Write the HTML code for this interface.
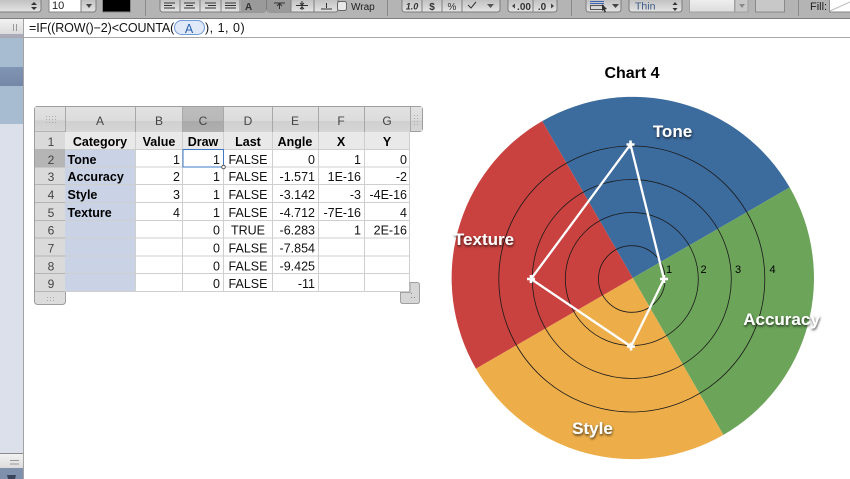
<!DOCTYPE html>
<html><head><meta charset="utf-8"><style>
html,body{margin:0;padding:0;background:#fff;width:850px;height:479px;overflow:hidden}
svg{display:block;font-family:"Liberation Sans",sans-serif}
.h{font-size:12.5px;font-weight:bold;text-anchor:middle;fill:#000}
.b{font-size:12.5px;font-weight:bold;fill:#000}
.r{font-size:12.5px;text-anchor:end;fill:#111}
.c{font-size:12.5px;text-anchor:middle;fill:#111}
.hd{font-size:12px;text-anchor:middle;fill:#444}
.lab{font-size:17px;font-weight:bold;fill:#fff;text-anchor:middle;filter:url(#sh)}
.t{font-size:11px;fill:#222}
.n{font-size:11px;fill:#000}
.gl{stroke:#cfcfcf;stroke-width:1;fill:none}
.bt{fill:url(#btn);stroke:#7d7d7d;stroke-width:1}
</style></head><body>
<svg width="850" height="479" viewBox="0 0 850 479" xmlns="http://www.w3.org/2000/svg">
<defs>
<linearGradient id="btn" x1="0" y1="0" x2="0" y2="1"><stop offset="0" stop-color="#bcbcbc"/><stop offset="1" stop-color="#e4e4e4"/></linearGradient>
<linearGradient id="hdg" x1="0" y1="0" x2="0" y2="1"><stop offset="0" stop-color="#e2e2e2"/><stop offset="0.55" stop-color="#dcdcdc"/><stop offset="0.56" stop-color="#cfcfcf"/><stop offset="1" stop-color="#d6d6d6"/></linearGradient>
<linearGradient id="hdd" x1="0" y1="0" x2="0" y2="1"><stop offset="0" stop-color="#bdbdbd"/><stop offset="0.55" stop-color="#b8b8b8"/><stop offset="0.56" stop-color="#a9a9a9"/><stop offset="1" stop-color="#b0b0b0"/></linearGradient>
<linearGradient id="sel" x1="0" y1="0" x2="0" y2="1"><stop offset="0" stop-color="#8094b4"/><stop offset="1" stop-color="#7587a6"/></linearGradient>
<linearGradient id="fb" x1="0" y1="0" x2="0" y2="1"><stop offset="0" stop-color="#f2f2f2"/><stop offset="1" stop-color="#dcdcdc"/></linearGradient>
<filter id="sh" x="-20%" y="-30%" width="140%" height="170%"><feDropShadow dx="0.5" dy="1.5" stdDeviation="1.4" flood-color="#000" flood-opacity="0.75"/></filter>
</defs>

<!-- toolbar -->
<rect x="0" y="0" width="850" height="18" fill="#b4b4b4"/>
<rect x="0" y="18" width="850" height="1" fill="#7e7e7e"/>
<path class="bt" d="M-5 -2H41V9Q41 12 38 12H-5Z"/>
<path d="M34 2l-3 3h6zM34 10l-3-3h6z" fill="#333"/>
<path d="M49 -2H81V12H49Z" fill="#fff" stroke="#888"/>
<text x="52" y="9" class="t">10</text>
<path class="bt" d="M81 -2H96V9Q96 12 93 12H81Z"/>
<path d="M86 4h6l-3 4z" fill="#444"/>
<rect x="102.500" y="-2" width="28" height="14" fill="#000" stroke="#888"/>
<rect x="145" y="0" width="1" height="16" fill="#8a8a8a"/>
<path class="bt" d="M160 -2H266V9Q266 12 263 12H163Q160 12 160 9Z"/>
<path d="M180 -2V12M200 -2V12M221 -2V12M240 -2V12" stroke="#808080"/>
<rect x="241" y="-1" width="25" height="13" fill="#9a9a9a"/>
<path d="M164 3h11M164 5.500h8M164 8h11M184 3h11M186 5.500h7M184 8h11M205 3h11M208 5.500h8M205 8h11M225 3h11M225 5.500h11M225 8h11" stroke="#333" stroke-width="1"/>
<text x="245" y="10" style="font-size:10px;font-weight:bold;fill:#333">A</text>
<path class="bt" d="M267 -2H338V9Q338 12 335 12H270Q267 12 267 9Z"/>
<rect x="267" y="-1" width="24" height="13" fill="#9a9a9a"/>
<path d="M291 -2V12M314 -2V12" stroke="#808080"/>
<path d="M274 3h11M279.500 4v5M277 6l2.500-2.500 2.500 2.500M296 5.500h12M302 1v9M300 3l2 2 2-2M300 9l2-2 2 2M321 9h11M326.500 3v5" stroke="#333" fill="none"/>
<rect x="337.500" y="1.500" width="9" height="9" rx="2" fill="#e8e8e8" stroke="#666"/>
<text x="351" y="10" style="font-size:10px;fill:#222">Wrap</text>
<rect x="387" y="0" width="1" height="16" fill="#8a8a8a"/>
<path class="bt" d="M402 -2H500V9Q500 12 497 12H405Q402 12 402 9Z"/>
<path d="M422 -2V12M442 -2V12M462 -2V12" stroke="#808080"/>
<text x="412" y="9.500" style="font-size:9px;font-weight:bold;font-style:italic;text-anchor:middle;fill:#333">1.0</text>
<text x="432" y="10" style="font-size:10px;font-weight:bold;text-anchor:middle;fill:#333">$</text>
<text x="452" y="10" style="font-size:10px;text-anchor:middle;fill:#333">%</text>
<path d="M468 5l3 3 5-6" stroke="#333" fill="none"/>
<path d="M487 4h7l-3.500 4z" fill="#555"/>
<path class="bt" d="M508 -2H557V9Q557 12 554 12H511Q508 12 508 9Z"/>
<path d="M533 -2V12" stroke="#808080"/>
<path d="M515 3.500l-3 2.500 3 2.500z" fill="#444"/>
<text x="524" y="10" style="font-size:10px;font-weight:bold;text-anchor:middle;fill:#333">.00</text>
<text x="542" y="10" style="font-size:10px;font-weight:bold;text-anchor:middle;fill:#333">.0</text>
<path d="M551 3.500l3 2.500-3 2.500z" fill="#444"/>
<rect x="571" y="0" width="1" height="16" fill="#8a8a8a"/>
<path class="bt" d="M586 -2H621V9Q621 12 618 12H589Q586 12 586 9Z"/>
<path d="M590 1.500h14" stroke="#3d63b5"/><path d="M590 3.500h14" stroke="#3d63b5"/>
<rect x="590.500" y="5.500" width="13" height="4" fill="none" stroke="#555"/>
<path d="M602 4l5 5-2 .5 1 2.500-1.500 .5-1-2.500-1.500 1z" fill="#333"/>
<path d="M612 4h7l-3.500 4z" fill="#444"/>
<path class="bt" d="M629 -2H682V9Q682 12 679 12H632Q629 12 629 9Z"/>
<text x="635" y="9.500" style="font-size:10.500px;fill:#3b5a86">Thin</text>
<path d="M675 2l-2.500 3h5zM675 11l-2.500-3h5z" fill="#333"/>
<rect x="689.500" y="-2" width="45" height="14" fill="url(#fb)" stroke="#a0a0a0"/>
<rect x="735" y="-2" width="13" height="14" fill="#c8c8c8" stroke="#a0a0a0"/>
<path d="M739 4h6l-3 4z" fill="#8a8a8a"/>
<rect x="755.500" y="-2" width="29" height="14" fill="#c8c8c8" stroke="#8a8a8a"/>
<rect x="798" y="0" width="1" height="16" fill="#8a8a8a"/>
<text x="810" y="10" class="t">Fill:</text>
<rect x="829.500" y="-2" width="30" height="14" fill="#fff" stroke="#888"/>
<path d="M830 11L850 2" stroke="#bbb"/>

<!-- formula bar -->
<rect x="0" y="19" width="850" height="18" fill="#fff"/>
<rect x="0" y="19" width="24" height="15" fill="url(#fb)"/>
<path d="M13.500 24v7M16.500 24v7" stroke="#999"/>
<rect x="0" y="34" width="24" height="3" fill="#aab"/>
<rect x="0" y="37" width="850" height="1" fill="#a8a8a8"/>
<text x="29" y="32" style="font-size:12.500px;fill:#111;letter-spacing:-0.1px">=IF((ROW()−2)&lt;COUNTA(</text>
<rect x="174.500" y="20.500" width="30" height="14" rx="7" fill="#dfe9f8" stroke="#6f9bd8"/>
<text x="189" y="33" style="font-size:12.500px;text-anchor:middle;fill:#2e62b0">A</text>
<text x="205" y="32" style="font-size:12.500px;fill:#111;letter-spacing:0.5px">), 1, 0)</text>

<!-- left sidebar -->
<rect x="0" y="38" width="24" height="441" fill="#dfe3ec"/>
<rect x="0" y="38" width="24" height="29" fill="#a8bcd1"/>
<rect x="0" y="67" width="24" height="19" fill="url(#sel)"/>
<rect x="0" y="86" width="24" height="38" fill="#a8bcd1"/>
<rect x="0" y="124" width="24" height="329" fill="#dce0ea"/>
<rect x="0" y="453" width="24" height="1" fill="#8a8a8a"/>
<rect x="0" y="454" width="24" height="14" fill="url(#fb)"/>
<path d="M10 460.500h9M10 464h9" stroke="#999"/>
<rect x="0" y="468" width="24" height="11" fill="#7f90ad"/>
<path d="M7 475h9l-1 4h-7z" fill="#39445a"/>
<rect x="23" y="19" width="1" height="460" fill="#a4a4a4"/>

<!-- table frame -->
<rect x="34.500" y="106.500" width="388" height="25" rx="3" fill="#d9d9d9" stroke="#9e9e9e"/>
<rect x="34.500" y="106.500" width="31" height="198" rx="3" fill="#dcdcdc" stroke="#9e9e9e"/>
<rect x="35" y="107" width="30" height="24" fill="url(#hdg)"/>
<rect x="65" y="107" width="70" height="25" fill="url(#hdg)"/>
<rect x="135" y="107" width="47" height="25" fill="url(#hdg)"/>
<rect x="182" y="107" width="41" height="25" fill="url(#hdd)"/>
<rect x="223" y="107" width="49" height="25" fill="url(#hdg)"/>
<rect x="272" y="107" width="46" height="25" fill="url(#hdg)"/>
<rect x="318" y="107" width="46" height="25" fill="url(#hdg)"/>
<rect x="364" y="107" width="46" height="25" fill="url(#hdg)"/>
<rect x="410" y="107" width="12" height="24" fill="url(#hdg)"/>
<path d="M65.500 107V132M135.500 107V132M182.500 107V132M223.500 107V132M272.500 107V132M318.500 107V132M364.500 107V132M410.500 107V132" stroke="#a8a8a8"/>
<g fill="#aaa"><rect x="46" y="116" width="1" height="1"/><rect x="49" y="116" width="1" height="1"/><rect x="52" y="116" width="1" height="1"/><rect x="55" y="116" width="1" height="1"/><rect x="46" y="119" width="1" height="1"/><rect x="49" y="119" width="1" height="1"/><rect x="52" y="119" width="1" height="1"/><rect x="55" y="119" width="1" height="1"/><rect x="46" y="122" width="1" height="1"/><rect x="49" y="122" width="1" height="1"/><rect x="52" y="122" width="1" height="1"/><rect x="55" y="122" width="1" height="1"/>
<rect x="414" y="115" width="1" height="1"/><rect x="417" y="115" width="1" height="1"/><rect x="414" y="118" width="1" height="1"/><rect x="417" y="118" width="1" height="1"/><rect x="414" y="121" width="1" height="1"/><rect x="417" y="121" width="1" height="1"/><rect x="414" y="124" width="1" height="1"/><rect x="417" y="124" width="1" height="1"/>
<rect x="47" y="297" width="1" height="1"/><rect x="50" y="297" width="1" height="1"/><rect x="53" y="297" width="1" height="1"/><rect x="47" y="300" width="1" height="1"/><rect x="50" y="300" width="1" height="1"/><rect x="53" y="300" width="1" height="1"/></g>
<text class="hd" x="100" y="125">A</text><text class="hd" x="159" y="125">B</text><text class="hd" x="203" y="125">C</text><text class="hd" x="248" y="125">D</text><text class="hd" x="295" y="125">E</text><text class="hd" x="341" y="125">F</text><text class="hd" x="387" y="125">G</text>

<!-- row headers -->
<rect x="35" y="132" width="30" height="17.500" fill="#dadada"/>
<rect x="35" y="149.500" width="30" height="17.500" fill="#b5b5b5"/>
<rect x="35" y="167" width="30" height="124" fill="#dadada"/>
<path d="M35 131.500H65M35 149.500H65M35 167H65M35 184.500H65M35 202.500H65M35 220.500H65M35 238H65M35 256H65M35 273.500H65M35 291.500H65" stroke="#b4b4b4"/>
<text class="hd" x="51" y="146">1</text><text class="hd" x="51" y="164">2</text><text class="hd" x="51" y="181">3</text><text class="hd" x="51" y="199">4</text><text class="hd" x="51" y="217">5</text><text class="hd" x="51" y="234.500">6</text><text class="hd" x="51" y="252.500">7</text><text class="hd" x="51" y="270.500">8</text><text class="hd" x="51" y="288">9</text>

<!-- grid cells -->
<rect x="65" y="132" width="345" height="17.500" fill="#e9e9e9"/>
<rect x="65" y="149.500" width="70" height="142" fill="#cad3e6"/>
<rect x="135" y="149.500" width="275" height="142" fill="#fff"/>
<path class="gl" d="M65 149.500H410M65 167H410M65 184.500H410M65 202.500H410M65 220.500H410M65 238H410M65 256H410M65 273.500H410M65 291.500H410"/>
<path class="gl" d="M135.500 132V291.500M182.500 132V291.500M223.500 132V291.500M272.500 132V291.500M318.500 132V291.500M364.500 132V291.500M409.500 132V291.500"/>

<text class="h" x="100" y="146">Category</text><text class="h" x="159" y="146">Value</text><text class="h" x="203" y="146">Draw</text><text class="h" x="248" y="146">Last</text><text class="h" x="295" y="146">Angle</text><text class="h" x="341" y="146">X</text><text class="h" x="387" y="146">Y</text>

<text class="b" x="67.500" y="164">Tone</text><text class="b" x="67.500" y="181">Accuracy</text><text class="b" x="67.500" y="199">Style</text><text class="b" x="67.500" y="217">Texture</text>

<text class="r" x="180" y="164">1</text><text class="r" x="180" y="181">2</text><text class="r" x="180" y="199">3</text><text class="r" x="180" y="217">4</text>
<text class="r" x="220" y="164">1</text><text class="r" x="220" y="181">1</text><text class="r" x="220" y="199">1</text><text class="r" x="220" y="217">1</text><text class="r" x="220" y="234.500">0</text><text class="r" x="220" y="252.500">0</text><text class="r" x="220" y="270.500">0</text><text class="r" x="220" y="288">0</text>

<text class="c" x="248" y="164">FALSE</text><text class="c" x="248" y="181">FALSE</text><text class="c" x="248" y="199">FALSE</text><text class="c" x="248" y="217">FALSE</text><text class="c" x="248" y="234.500">TRUE</text><text class="c" x="248" y="252.500">FALSE</text><text class="c" x="248" y="270.500">FALSE</text><text class="c" x="248" y="288">FALSE</text>

<text class="r" x="315" y="164">0</text><text class="r" x="315" y="181">-1.571</text><text class="r" x="315" y="199">-3.142</text><text class="r" x="315" y="217">-4.712</text><text class="r" x="315" y="234.500">-6.283</text><text class="r" x="315" y="252.500">-7.854</text><text class="r" x="315" y="270.500">-9.425</text><text class="r" x="315" y="288">-11</text>

<text class="r" x="361" y="164">1</text><text class="r" x="361" y="181">1E-16</text><text class="r" x="361" y="199">-3</text><text class="r" x="361" y="217">-7E-16</text><text class="r" x="361" y="234.500">1</text>

<text class="r" x="407" y="164">0</text><text class="r" x="407" y="181">-2</text><text class="r" x="407" y="199">-4E-16</text><text class="r" x="407" y="217">4</text><text class="r" x="407" y="234.500">2E-16</text>

<!-- selection -->
<rect x="183" y="149.500" width="40.500" height="17.500" fill="none" stroke="#3f78c4" stroke-width="1"/>
<circle cx="223.500" cy="167" r="1.800" fill="#fff" stroke="#555"/>
<!-- resize handle -->
<path d="M400.500 292.500H410V282.500H417Q419.500 282.500 419.500 285V301Q419.500 303.500 417 303.500H403Q400.500 303.500 400.500 301Z" fill="#d6d6d6" stroke="#a0a0a0"/>
<path d="M411 293h1v1h-1zM411 297h1v1h-1zM414 297h1v1h-1z" fill="#888"/>

<!-- chart -->
<text x="632" y="78" style="font-size:16px;font-weight:bold;text-anchor:middle;fill:#000">Chart 4</text>
<g transform="translate(632.800 278)">
<path d="M0 0L-90.600 -156.900A181.200 181.200 0 0 1 156.900 -90.600Z" fill="#3c6b9e"/>
<path d="M0 0L156.900 -90.600A181.200 181.200 0 0 1 90.600 156.900Z" fill="#6ca45a"/>
<path d="M0 0L90.600 156.900A181.200 181.200 0 0 1 -156.900 90.600Z" fill="#edae4a"/>
<path d="M0 0L-156.900 90.600A181.200 181.200 0 0 1 -90.600 -156.900Z" fill="#c9423f"/>
</g>
<g fill="none" stroke="#1a1a1a" stroke-width="0.8">
<circle cx="631.800" cy="279" r="33.300"/>
<circle cx="631.800" cy="279" r="66.500"/>
<circle cx="631.800" cy="279" r="99.500"/>
<circle cx="631.800" cy="279" r="133"/>
</g>
<text class="n" x="669" y="273" text-anchor="middle" style="font-size:11px">1</text>
<text class="n" x="703.500" y="273" text-anchor="middle">2</text>
<text class="n" x="738" y="273" text-anchor="middle">3</text>
<text class="n" x="772.500" y="273" text-anchor="middle">4</text>
<path d="M630.500 144.500L664 279L631 346.500L531 279Z" fill="none" stroke="#fff" stroke-width="2.300"/>
<g stroke="#fff" stroke-width="2.600">
<path d="M626.500 144.500h8M630.500 140.500v8M660 279h8M664 275v8M627 346.500h8M631 342.500v8M527 279h8M531 275v8"/>
</g>
<text class="lab" x="672.500" y="137">Tone</text>
<text class="lab" x="781.500" y="325">Accuracy</text>
<text class="lab" x="592.500" y="434">Style</text>
<text class="lab" x="484" y="245">Texture</text>
</svg>
</body></html>
